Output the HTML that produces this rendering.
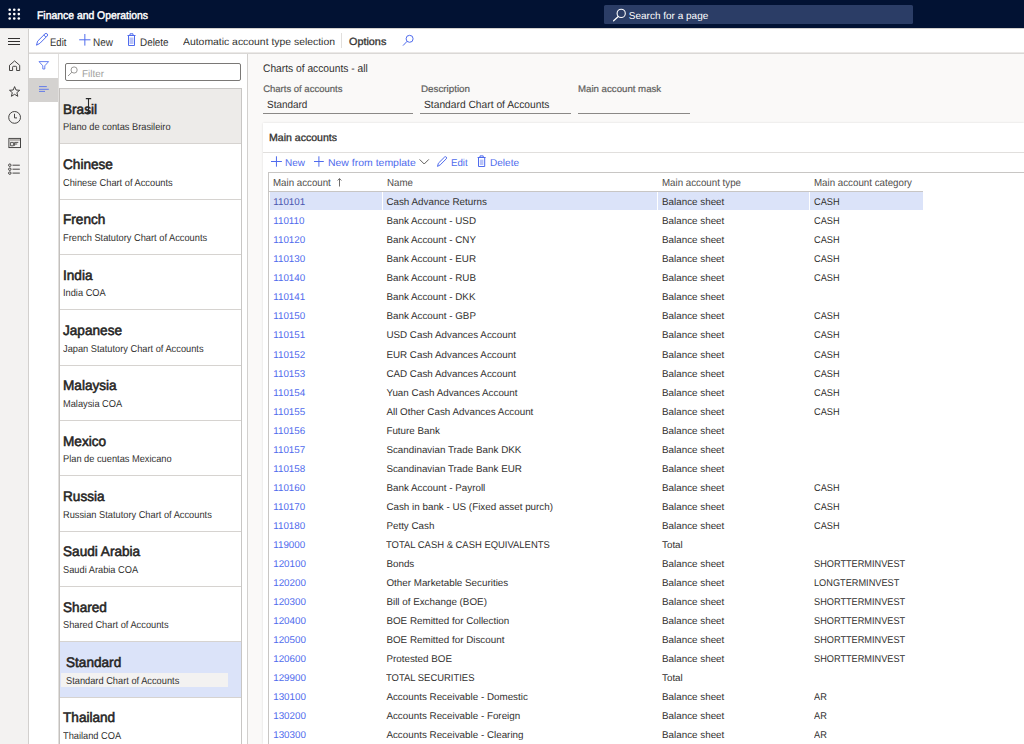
<!DOCTYPE html>
<html><head><meta charset="utf-8">
<style>
html,body{margin:0;padding:0;width:1024px;height:744px;overflow:hidden;background:#faf9f8;font-family:"Liberation Sans", sans-serif;}
.t{position:absolute;white-space:nowrap;text-rendering:geometricPrecision;transform-origin:0 0;}
svg{position:absolute;overflow:visible;}
</style></head><body>
<div style="position:absolute;left:0px;top:0px;width:1024px;height:28px;background:#021233"></div>
<svg style="left:0;top:0" width="28" height="28"><circle cx="9.7" cy="9.7" r="1.3" fill="#fff"/><circle cx="9.7" cy="14.1" r="1.3" fill="#fff"/><circle cx="9.7" cy="18.5" r="1.3" fill="#fff"/><circle cx="14.25" cy="9.7" r="1.3" fill="#fff"/><circle cx="14.25" cy="14.1" r="1.3" fill="#fff"/><circle cx="14.25" cy="18.5" r="1.3" fill="#fff"/><circle cx="18.8" cy="9.7" r="1.3" fill="#fff"/><circle cx="18.8" cy="14.1" r="1.3" fill="#fff"/><circle cx="18.8" cy="18.5" r="1.3" fill="#fff"/></svg>
<div style="position:absolute;left:604px;top:5.2px;width:309px;height:18.4px;background:#2b3d66;border-radius:1.5px"></div>
<svg style="left:0;top:0" width="1024" height="28"><circle cx="621.2" cy="13.4" r="4.1" fill="none" stroke="#fff" stroke-width="1.1"/><line x1="618.3" y1="16.5" x2="613.6" y2="20.8" stroke="#fff" stroke-width="1.2" stroke-linecap="round"/></svg>
<div style="position:absolute;left:0px;top:28px;width:1024px;height:1px;background:#d2d0ce"></div>
<div style="position:absolute;left:28px;top:29px;width:996px;height:23px;background:#fff"></div>
<div style="position:absolute;left:28px;top:52px;width:996px;height:1px;background:#ebe9e7"></div>
<div style="position:absolute;left:28px;top:53px;width:996px;height:1px;background:#dad8d6"></div>
<svg style="left:0;top:0" width="500" height="60"><path d="M36.5 45.2 L37.6 41.2 L45 33.8 Q46.2 32.9 47.2 33.9 Q48.1 35 47.2 36 L39.8 43.4 Z M43.8 35 L46 37.2" fill="none" stroke="#4f6bed" stroke-width="1" stroke-linejoin="round"/><path d="M79.2 39.8 H90.5 M84.85 34 V45.6" stroke="#4f6bed" stroke-width="1" fill="none"/><rect x="129.5" y="37.5" width="4" height="6.5" fill="#b9c3f7"/><path d="M127.5 35.5 H135.5 M128.5 35.5 V45.5 H134.5 V35.5 M130 35.5 V33.8 H133 V35.5" stroke="#4f6bed" stroke-width="1" fill="none"/><circle cx="409.6" cy="38.8" r="3.5" fill="none" stroke="#4f6bed" stroke-width="1"/><line x1="407.1" y1="41.3" x2="403" y2="45.6" stroke="#4f6bed" stroke-width="1"/></svg>
<div style="position:absolute;left:341px;top:33px;width:1px;height:15px;background:#e1dfdd"></div>
<div style="position:absolute;left:0px;top:29px;width:28px;height:715px;background:#f3f2f1"></div>
<div style="position:absolute;left:28px;top:29px;width:1px;height:715px;background:#d2d0ce"></div>
<svg style="left:0;top:0" width="28" height="200"><path d="M8 38.5 H20 M8 41.5 H20 M8 44.5 H20" stroke="#323130" stroke-width="1"/><path d="M9.5 70.5 V65.3 L14.6 60.9 L19.7 65.3 V70.5 H16.6 V67.2 Q16.6 66.3 15.7 66.3 H13.5 Q12.6 66.3 12.6 67.2 V70.5 Z" fill="none" stroke="#323130" stroke-width="0.9" stroke-linejoin="round"/><path d="M14.6 86.6 L16 90 L19.7 90.3 L16.9 92.6 L17.8 96.3 L14.6 94.3 L11.4 96.3 L12.3 92.6 L9.5 90.3 L13.2 90 Z" fill="none" stroke="#323130" stroke-width="0.9" stroke-linejoin="round"/><circle cx="14.6" cy="117.4" r="5.9" fill="none" stroke="#323130" stroke-width="0.9"/><path d="M14.5 113.8 V117.9 H17" fill="none" stroke="#323130" stroke-width="0.9"/><rect x="8.9" y="138.4" width="11.6" height="9.2" fill="none" stroke="#323130" stroke-width="0.9"/><rect x="9.4" y="138.9" width="10.6" height="2" fill="#b3b0ad"/><path d="M10.6 142.4 H13.4 V145.8 H10.6 Z M14.6 142.4 H18.3 M14.6 142.4 V145.8 M14.6 144 H17.2" stroke="#323130" stroke-width="0.8" fill="none"/><circle cx="9.8" cy="165.2" r="1.25" fill="none" stroke="#323130" stroke-width="0.9"/><circle cx="9.8" cy="169.2" r="1.25" fill="none" stroke="#323130" stroke-width="0.9"/><circle cx="9.8" cy="173.1" r="1.25" fill="none" stroke="#323130" stroke-width="0.9"/><path d="M12.5 165.2 H19.8 M12.5 169.2 H19.8 M12.5 173.1 H19.8" stroke="#323130" stroke-width="0.9"/></svg>
<div style="position:absolute;left:29px;top:54px;width:29px;height:690px;background:#fff"></div>
<div style="position:absolute;left:58px;top:54px;width:1px;height:690px;background:#e1dfdd"></div>
<div style="position:absolute;left:29px;top:78px;width:29px;height:24px;background:#d4d2d0"></div>
<svg style="left:0;top:0" width="60" height="110"><path d="M39 61.6 H48.6 L44.8 65.8 V69 H42.8 V65.8 Z" fill="none" stroke="#4f6bed" stroke-width="0.85" stroke-linejoin="round"/><path d="M39 86.6 H46.8 M39 89.3 H48.8 M39 91.4 H45" stroke="#4f6bed" stroke-width="0.85"/></svg>
<div style="position:absolute;left:59px;top:54px;width:188px;height:690px;background:#fff"></div>
<div style="position:absolute;left:247px;top:54px;width:1px;height:690px;background:#d2d0ce"></div>
<div style="position:absolute;left:64.5px;top:63.2px;width:176px;height:17.6px;border:1px solid #7a7876;border-radius:2px;background:#fff;box-sizing:border-box"></div>
<svg style="left:0;top:0" width="260" height="100"><circle cx="74.1" cy="70" r="3.1" fill="none" stroke="#8f8d8b" stroke-width="0.9"/><line x1="71.9" y1="72.2" x2="68" y2="76" stroke="#8f8d8b" stroke-width="0.9"/></svg>
<div style="position:absolute;left:59px;top:88px;width:1px;height:656px;background:#c3c0bd"></div>
<div style="position:absolute;left:241px;top:88px;width:1px;height:656px;background:#c8c6c4"></div>
<div style="position:absolute;left:60px;top:88px;width:181px;height:1px;background:#c8c6c4"></div>
<div style="position:absolute;left:60px;top:89.0px;width:181px;height:54.33px;background:#edebe9"></div>
<div style="position:absolute;left:60px;top:144.33px;width:181px;height:54.33px;background:#fff"></div>
<div style="position:absolute;left:60px;top:143.33px;width:181px;height:1px;background:#d6d3d0"></div>
<div style="position:absolute;left:60px;top:199.66px;width:181px;height:54.33px;background:#fff"></div>
<div style="position:absolute;left:60px;top:198.66px;width:181px;height:1px;background:#d6d3d0"></div>
<div style="position:absolute;left:60px;top:254.99px;width:181px;height:54.33px;background:#fff"></div>
<div style="position:absolute;left:60px;top:253.99px;width:181px;height:1px;background:#d6d3d0"></div>
<div style="position:absolute;left:60px;top:310.32px;width:181px;height:54.33px;background:#fff"></div>
<div style="position:absolute;left:60px;top:309.32px;width:181px;height:1px;background:#d6d3d0"></div>
<div style="position:absolute;left:60px;top:365.65px;width:181px;height:54.33px;background:#fff"></div>
<div style="position:absolute;left:60px;top:364.65px;width:181px;height:1px;background:#d6d3d0"></div>
<div style="position:absolute;left:60px;top:420.98px;width:181px;height:54.33px;background:#fff"></div>
<div style="position:absolute;left:60px;top:419.98px;width:181px;height:1px;background:#d6d3d0"></div>
<div style="position:absolute;left:60px;top:476.31px;width:181px;height:54.33px;background:#fff"></div>
<div style="position:absolute;left:60px;top:475.31px;width:181px;height:1px;background:#d6d3d0"></div>
<div style="position:absolute;left:60px;top:531.64px;width:181px;height:54.33px;background:#fff"></div>
<div style="position:absolute;left:60px;top:530.64px;width:181px;height:1px;background:#d6d3d0"></div>
<div style="position:absolute;left:60px;top:586.97px;width:181px;height:54.33px;background:#fff"></div>
<div style="position:absolute;left:60px;top:585.97px;width:181px;height:1px;background:#d6d3d0"></div>
<div style="position:absolute;left:60px;top:642.3px;width:181px;height:54.33px;background:#dbe3f9"></div>
<div style="position:absolute;left:60px;top:641.3px;width:181px;height:1px;background:#d6d3d0"></div>
<div style="position:absolute;left:60.7px;top:673.3px;width:167px;height:14px;background:#f3f2f1"></div>
<div style="position:absolute;left:60px;top:697.63px;width:181px;height:54.33px;background:#fff"></div>
<div style="position:absolute;left:60px;top:696.63px;width:181px;height:1px;background:#d6d3d0"></div>
<div style="position:absolute;left:263px;top:112.5px;width:150px;height:1px;background:#8a8886"></div>
<div style="position:absolute;left:420px;top:112.5px;width:150.6px;height:1px;background:#8a8886"></div>
<div style="position:absolute;left:578px;top:112.5px;width:111.5px;height:1px;background:#8a8886"></div>
<div style="position:absolute;left:263px;top:123.4px;width:761px;height:621px;background:#fff;box-shadow:0 0 2px rgba(0,0,0,0.12)"></div>
<div style="position:absolute;left:263px;top:152px;width:761px;height:1px;background:#e1dfdd"></div>
<svg style="left:0;top:0" width="1024" height="180"><path d="M271 161.5 H281.9 M276.45 156.3 V166.7" stroke="#4f6bed" stroke-width="1" fill="none"/><path d="M314 161.5 H323.8 M318.9 156.3 V166.7" stroke="#4f6bed" stroke-width="1" fill="none"/><path d="M419.6 159.4 L424.2 164 L428.8 159.4" stroke="#605e5c" stroke-width="1" fill="none"/><path d="M437.5 166.4 L438.4 163.2 L444.5 157.1 Q445.5 156.3 446.3 157.1 Q447.1 158 446.3 158.8 L440.2 164.9 Z" fill="none" stroke="#4f6bed" stroke-width="1" stroke-linejoin="round"/><rect x="479.8" y="159.6" width="3.6" height="5.4" fill="#b9c3f7"/><path d="M477.6 157.5 H485.6 M478.5 157.5 V166.5 H484.7 V157.5 M480 157.5 V155.9 H483.2 V157.5" stroke="#4f6bed" stroke-width="1" fill="none"/></svg>
<div style="position:absolute;left:268px;top:172px;width:756px;height:1px;background:#c8c6c4"></div>
<div style="position:absolute;left:268px;top:172px;width:1px;height:572px;background:#c8c6c4"></div>
<div style="position:absolute;left:269px;top:191px;width:654px;height:1px;background:#c8c6c4"></div>
<svg style="left:0;top:0" width="400" height="200"><path d="M339.5 178.6 V186.5 M337.6 180.5 L339.5 178.6 L341.4 180.5" stroke="#605e5c" stroke-width="0.9" fill="none"/></svg>
<div style="position:absolute;left:270px;top:191.6px;width:652.7px;height:18px;background:#dbe3f9"></div>
<div style="position:absolute;left:382px;top:191.6px;width:1px;height:18px;background:#fff"></div>
<div style="position:absolute;left:656.5px;top:191.6px;width:1px;height:18px;background:#fff"></div>
<div style="position:absolute;left:808.8px;top:191.6px;width:1px;height:18px;background:#fff"></div>
<div class="t" style="left:37px;top:11px;font-size:11px;line-height:11px;font-weight:400;color:#fff;-webkit-text-stroke:0.45px #fff;transform:scaleX(0.9453);">Finance and Operations</div>
<div class="t" style="left:628.8px;top:12px;font-size:10px;line-height:10px;font-weight:400;color:#fff;">Search for a page</div>
<div class="t" style="left:49.9px;top:38px;font-size:11px;line-height:11px;font-weight:400;color:#323130;transform:scaleX(0.8646);">Edit</div>
<div class="t" style="left:93.3px;top:38px;font-size:11px;line-height:11px;font-weight:400;color:#323130;transform:scaleX(0.9039);">New</div>
<div class="t" style="left:139.7px;top:38px;font-size:11px;line-height:11px;font-weight:400;color:#323130;transform:scaleX(0.8995);">Delete</div>
<div class="t" style="left:182.9px;top:38px;font-size:10px;line-height:10px;font-weight:400;color:#323130;transform:scaleX(1.0396);">Automatic account type selection</div>
<div class="t" style="left:348.9px;top:38px;font-size:10.4px;line-height:10.4px;font-weight:400;color:#323130;-webkit-text-stroke:0.3px #323130;transform:scaleX(1.0415);">Options</div>
<div class="t" style="left:81.5px;top:70px;font-size:10px;line-height:10px;font-weight:400;color:#a19f9d;transform:scaleX(0.9895);">Filter</div>
<div class="t" style="left:62.7px;top:103px;font-size:13.9px;line-height:13.9px;font-weight:400;color:#252423;-webkit-text-stroke:0.55px #252423;transform:scaleX(0.9795);">Brasil</div>
<div class="t" style="left:62.7px;top:123px;font-size:10.0px;line-height:10.0px;font-weight:400;color:#323130;transform:scaleX(0.9261);">Plano de contas Brasileiro</div>
<div class="t" style="left:62.7px;top:158px;font-size:13.9px;line-height:13.9px;font-weight:400;color:#252423;-webkit-text-stroke:0.55px #252423;transform:scaleX(0.9795);">Chinese</div>
<div class="t" style="left:62.7px;top:179px;font-size:10.0px;line-height:10.0px;font-weight:400;color:#323130;transform:scaleX(0.9261);">Chinese Chart of Accounts</div>
<div class="t" style="left:62.7px;top:213px;font-size:13.9px;line-height:13.9px;font-weight:400;color:#252423;-webkit-text-stroke:0.55px #252423;transform:scaleX(0.9795);">French</div>
<div class="t" style="left:62.7px;top:234px;font-size:10.0px;line-height:10.0px;font-weight:400;color:#323130;transform:scaleX(0.9261);">French Statutory Chart of Accounts</div>
<div class="t" style="left:62.7px;top:269px;font-size:13.9px;line-height:13.9px;font-weight:400;color:#252423;-webkit-text-stroke:0.55px #252423;transform:scaleX(0.9795);">India</div>
<div class="t" style="left:62.7px;top:289px;font-size:10.0px;line-height:10.0px;font-weight:400;color:#323130;transform:scaleX(0.9261);">India COA</div>
<div class="t" style="left:62.7px;top:324px;font-size:13.9px;line-height:13.9px;font-weight:400;color:#252423;-webkit-text-stroke:0.55px #252423;transform:scaleX(0.9795);">Japanese</div>
<div class="t" style="left:62.7px;top:345px;font-size:10.0px;line-height:10.0px;font-weight:400;color:#323130;transform:scaleX(0.9261);">Japan Statutory Chart of Accounts</div>
<div class="t" style="left:62.7px;top:379px;font-size:13.9px;line-height:13.9px;font-weight:400;color:#252423;-webkit-text-stroke:0.55px #252423;transform:scaleX(0.9795);">Malaysia</div>
<div class="t" style="left:62.7px;top:400px;font-size:10.0px;line-height:10.0px;font-weight:400;color:#323130;transform:scaleX(0.9261);">Malaysia COA</div>
<div class="t" style="left:62.7px;top:435px;font-size:13.9px;line-height:13.9px;font-weight:400;color:#252423;-webkit-text-stroke:0.55px #252423;transform:scaleX(0.9795);">Mexico</div>
<div class="t" style="left:62.7px;top:455px;font-size:10.0px;line-height:10.0px;font-weight:400;color:#323130;transform:scaleX(0.9261);">Plan de cuentas Mexicano</div>
<div class="t" style="left:62.7px;top:490px;font-size:13.9px;line-height:13.9px;font-weight:400;color:#252423;-webkit-text-stroke:0.55px #252423;transform:scaleX(0.9795);">Russia</div>
<div class="t" style="left:62.7px;top:511px;font-size:10.0px;line-height:10.0px;font-weight:400;color:#323130;transform:scaleX(0.9261);">Russian Statutory Chart of Accounts</div>
<div class="t" style="left:62.7px;top:545px;font-size:13.9px;line-height:13.9px;font-weight:400;color:#252423;-webkit-text-stroke:0.55px #252423;transform:scaleX(0.9795);">Saudi Arabia</div>
<div class="t" style="left:62.7px;top:566px;font-size:10.0px;line-height:10.0px;font-weight:400;color:#323130;transform:scaleX(0.9261);">Saudi Arabia COA</div>
<div class="t" style="left:62.7px;top:601px;font-size:13.9px;line-height:13.9px;font-weight:400;color:#252423;-webkit-text-stroke:0.55px #252423;transform:scaleX(0.9795);">Shared</div>
<div class="t" style="left:62.7px;top:621px;font-size:10.0px;line-height:10.0px;font-weight:400;color:#323130;transform:scaleX(0.9261);">Shared Chart of Accounts</div>
<div class="t" style="left:65.7px;top:656px;font-size:13.9px;line-height:13.9px;font-weight:400;color:#252423;-webkit-text-stroke:0.55px #252423;transform:scaleX(0.9795);">Standard</div>
<div class="t" style="left:65.7px;top:677px;font-size:10.0px;line-height:10.0px;font-weight:400;color:#323130;transform:scaleX(0.9261);">Standard Chart of Accounts</div>
<div class="t" style="left:62.7px;top:711px;font-size:13.9px;line-height:13.9px;font-weight:400;color:#252423;-webkit-text-stroke:0.55px #252423;transform:scaleX(0.9795);">Thailand</div>
<div class="t" style="left:62.7px;top:732px;font-size:10.0px;line-height:10.0px;font-weight:400;color:#323130;transform:scaleX(0.9261);">Thailand COA</div>
<div class="t" style="left:263.4px;top:64px;font-size:11px;line-height:11px;font-weight:400;color:#323130;transform:scaleX(0.9307);">Charts of accounts - all</div>
<div class="t" style="left:263.2px;top:85px;font-size:9.5px;line-height:9.5px;font-weight:400;color:#605e5c;-webkit-text-stroke:0.2px #605e5c;">Charts of accounts</div>
<div class="t" style="left:266.9px;top:100px;font-size:10.5px;line-height:10.5px;font-weight:400;color:#323130;transform:scaleX(0.9478);">Standard</div>
<div class="t" style="left:420.5px;top:85px;font-size:9.5px;line-height:9.5px;font-weight:400;color:#605e5c;-webkit-text-stroke:0.2px #605e5c;transform:scaleX(1.0309);">Description</div>
<div class="t" style="left:424.2px;top:100px;font-size:10.5px;line-height:10.5px;font-weight:400;color:#323130;transform:scaleX(0.9765);">Standard Chart of Accounts</div>
<div class="t" style="left:578px;top:85px;font-size:9.5px;line-height:9.5px;font-weight:400;color:#605e5c;-webkit-text-stroke:0.2px #605e5c;transform:scaleX(1.0166);">Main account mask</div>
<div class="t" style="left:269.1px;top:134px;font-size:10.4px;line-height:10.4px;font-weight:400;color:#323130;-webkit-text-stroke:0.3px #323130;transform:scaleX(1.0149);">Main accounts</div>
<div class="t" style="left:285px;top:159px;font-size:10px;line-height:10px;font-weight:400;color:#4f6bed;transform:scaleX(0.9942);">New</div>
<div class="t" style="left:327.6px;top:159px;font-size:10px;line-height:10px;font-weight:400;color:#4f6bed;transform:scaleX(1.0462);">New from template</div>
<div class="t" style="left:450.7px;top:159px;font-size:10px;line-height:10px;font-weight:400;color:#4f6bed;transform:scaleX(0.9690);">Edit</div>
<div class="t" style="left:490.3px;top:159px;font-size:10px;line-height:10px;font-weight:400;color:#4f6bed;transform:scaleX(1.0032);">Delete</div>
<div class="t" style="left:273.1px;top:179px;font-size:10.3px;line-height:10.3px;font-weight:400;color:#4f4d4b;transform:scaleX(0.9437);">Main account</div>
<div class="t" style="left:386.7px;top:179px;font-size:10.3px;line-height:10.3px;font-weight:400;color:#4f4d4b;transform:scaleX(0.9449);">Name</div>
<div class="t" style="left:662px;top:179px;font-size:10.3px;line-height:10.3px;font-weight:400;color:#4f4d4b;transform:scaleX(0.9452);">Main account type</div>
<div class="t" style="left:814.3px;top:179px;font-size:10.3px;line-height:10.3px;font-weight:400;color:#4f4d4b;transform:scaleX(0.9459);">Main account category</div>
<div class="t" style="left:273.2px;top:198px;font-size:9.84px;line-height:9.84px;font-weight:400;color:#4a57b0;">110101</div>
<div class="t" style="left:386.4px;top:198px;font-size:9.84px;line-height:9.84px;font-weight:400;color:#323130;">Cash Advance Returns</div>
<div class="t" style="left:662px;top:198px;font-size:9.84px;line-height:9.84px;font-weight:400;color:#323130;">Balance sheet</div>
<div class="t" style="left:814.2px;top:198px;font-size:9.84px;line-height:9.84px;font-weight:400;color:#323130;transform:scaleX(0.9350);">CASH</div>
<div class="t" style="left:273.2px;top:217px;font-size:9.84px;line-height:9.84px;font-weight:400;color:#4f6bed;">110110</div>
<div class="t" style="left:386.4px;top:217px;font-size:9.84px;line-height:9.84px;font-weight:400;color:#323130;">Bank Account - USD</div>
<div class="t" style="left:662px;top:217px;font-size:9.84px;line-height:9.84px;font-weight:400;color:#323130;">Balance sheet</div>
<div class="t" style="left:814.2px;top:217px;font-size:9.84px;line-height:9.84px;font-weight:400;color:#323130;transform:scaleX(0.9350);">CASH</div>
<div class="t" style="left:273.2px;top:236px;font-size:9.84px;line-height:9.84px;font-weight:400;color:#4f6bed;">110120</div>
<div class="t" style="left:386.4px;top:236px;font-size:9.84px;line-height:9.84px;font-weight:400;color:#323130;">Bank Account - CNY</div>
<div class="t" style="left:662px;top:236px;font-size:9.84px;line-height:9.84px;font-weight:400;color:#323130;">Balance sheet</div>
<div class="t" style="left:814.2px;top:236px;font-size:9.84px;line-height:9.84px;font-weight:400;color:#323130;transform:scaleX(0.9350);">CASH</div>
<div class="t" style="left:273.2px;top:255px;font-size:9.84px;line-height:9.84px;font-weight:400;color:#4f6bed;">110130</div>
<div class="t" style="left:386.4px;top:255px;font-size:9.84px;line-height:9.84px;font-weight:400;color:#323130;">Bank Account - EUR</div>
<div class="t" style="left:662px;top:255px;font-size:9.84px;line-height:9.84px;font-weight:400;color:#323130;">Balance sheet</div>
<div class="t" style="left:814.2px;top:255px;font-size:9.84px;line-height:9.84px;font-weight:400;color:#323130;transform:scaleX(0.9350);">CASH</div>
<div class="t" style="left:273.2px;top:274px;font-size:9.84px;line-height:9.84px;font-weight:400;color:#4f6bed;">110140</div>
<div class="t" style="left:386.4px;top:274px;font-size:9.84px;line-height:9.84px;font-weight:400;color:#323130;">Bank Account - RUB</div>
<div class="t" style="left:662px;top:274px;font-size:9.84px;line-height:9.84px;font-weight:400;color:#323130;">Balance sheet</div>
<div class="t" style="left:814.2px;top:274px;font-size:9.84px;line-height:9.84px;font-weight:400;color:#323130;transform:scaleX(0.9350);">CASH</div>
<div class="t" style="left:273.2px;top:293px;font-size:9.84px;line-height:9.84px;font-weight:400;color:#4f6bed;">110141</div>
<div class="t" style="left:386.4px;top:293px;font-size:9.84px;line-height:9.84px;font-weight:400;color:#323130;">Bank Account - DKK</div>
<div class="t" style="left:662px;top:293px;font-size:9.84px;line-height:9.84px;font-weight:400;color:#323130;">Balance sheet</div>
<div class="t" style="left:273.2px;top:312px;font-size:9.84px;line-height:9.84px;font-weight:400;color:#4f6bed;">110150</div>
<div class="t" style="left:386.4px;top:312px;font-size:9.84px;line-height:9.84px;font-weight:400;color:#323130;">Bank Account - GBP</div>
<div class="t" style="left:662px;top:312px;font-size:9.84px;line-height:9.84px;font-weight:400;color:#323130;">Balance sheet</div>
<div class="t" style="left:814.2px;top:312px;font-size:9.84px;line-height:9.84px;font-weight:400;color:#323130;transform:scaleX(0.9350);">CASH</div>
<div class="t" style="left:273.2px;top:331px;font-size:9.84px;line-height:9.84px;font-weight:400;color:#4f6bed;">110151</div>
<div class="t" style="left:386.4px;top:331px;font-size:9.84px;line-height:9.84px;font-weight:400;color:#323130;">USD Cash Advances Account</div>
<div class="t" style="left:662px;top:331px;font-size:9.84px;line-height:9.84px;font-weight:400;color:#323130;">Balance sheet</div>
<div class="t" style="left:814.2px;top:331px;font-size:9.84px;line-height:9.84px;font-weight:400;color:#323130;transform:scaleX(0.9350);">CASH</div>
<div class="t" style="left:273.2px;top:351px;font-size:9.84px;line-height:9.84px;font-weight:400;color:#4f6bed;">110152</div>
<div class="t" style="left:386.4px;top:351px;font-size:9.84px;line-height:9.84px;font-weight:400;color:#323130;">EUR Cash Advances Account</div>
<div class="t" style="left:662px;top:351px;font-size:9.84px;line-height:9.84px;font-weight:400;color:#323130;">Balance sheet</div>
<div class="t" style="left:814.2px;top:351px;font-size:9.84px;line-height:9.84px;font-weight:400;color:#323130;transform:scaleX(0.9350);">CASH</div>
<div class="t" style="left:273.2px;top:370px;font-size:9.84px;line-height:9.84px;font-weight:400;color:#4f6bed;">110153</div>
<div class="t" style="left:386.4px;top:370px;font-size:9.84px;line-height:9.84px;font-weight:400;color:#323130;">CAD Cash Advances Account</div>
<div class="t" style="left:662px;top:370px;font-size:9.84px;line-height:9.84px;font-weight:400;color:#323130;">Balance sheet</div>
<div class="t" style="left:814.2px;top:370px;font-size:9.84px;line-height:9.84px;font-weight:400;color:#323130;transform:scaleX(0.9350);">CASH</div>
<div class="t" style="left:273.2px;top:389px;font-size:9.84px;line-height:9.84px;font-weight:400;color:#4f6bed;">110154</div>
<div class="t" style="left:386.4px;top:389px;font-size:9.84px;line-height:9.84px;font-weight:400;color:#323130;">Yuan Cash Advances Account</div>
<div class="t" style="left:662px;top:389px;font-size:9.84px;line-height:9.84px;font-weight:400;color:#323130;">Balance sheet</div>
<div class="t" style="left:814.2px;top:389px;font-size:9.84px;line-height:9.84px;font-weight:400;color:#323130;transform:scaleX(0.9350);">CASH</div>
<div class="t" style="left:273.2px;top:408px;font-size:9.84px;line-height:9.84px;font-weight:400;color:#4f6bed;">110155</div>
<div class="t" style="left:386.4px;top:408px;font-size:9.84px;line-height:9.84px;font-weight:400;color:#323130;">All Other Cash Advances Account</div>
<div class="t" style="left:662px;top:408px;font-size:9.84px;line-height:9.84px;font-weight:400;color:#323130;">Balance sheet</div>
<div class="t" style="left:814.2px;top:408px;font-size:9.84px;line-height:9.84px;font-weight:400;color:#323130;transform:scaleX(0.9350);">CASH</div>
<div class="t" style="left:273.2px;top:427px;font-size:9.84px;line-height:9.84px;font-weight:400;color:#4f6bed;">110156</div>
<div class="t" style="left:386.4px;top:427px;font-size:9.84px;line-height:9.84px;font-weight:400;color:#323130;">Future Bank</div>
<div class="t" style="left:662px;top:427px;font-size:9.84px;line-height:9.84px;font-weight:400;color:#323130;">Balance sheet</div>
<div class="t" style="left:273.2px;top:446px;font-size:9.84px;line-height:9.84px;font-weight:400;color:#4f6bed;">110157</div>
<div class="t" style="left:386.4px;top:446px;font-size:9.84px;line-height:9.84px;font-weight:400;color:#323130;">Scandinavian Trade Bank DKK</div>
<div class="t" style="left:662px;top:446px;font-size:9.84px;line-height:9.84px;font-weight:400;color:#323130;">Balance sheet</div>
<div class="t" style="left:273.2px;top:465px;font-size:9.84px;line-height:9.84px;font-weight:400;color:#4f6bed;">110158</div>
<div class="t" style="left:386.4px;top:465px;font-size:9.84px;line-height:9.84px;font-weight:400;color:#323130;">Scandinavian Trade Bank EUR</div>
<div class="t" style="left:662px;top:465px;font-size:9.84px;line-height:9.84px;font-weight:400;color:#323130;">Balance sheet</div>
<div class="t" style="left:273.2px;top:484px;font-size:9.84px;line-height:9.84px;font-weight:400;color:#4f6bed;">110160</div>
<div class="t" style="left:386.4px;top:484px;font-size:9.84px;line-height:9.84px;font-weight:400;color:#323130;">Bank Account - Payroll</div>
<div class="t" style="left:662px;top:484px;font-size:9.84px;line-height:9.84px;font-weight:400;color:#323130;">Balance sheet</div>
<div class="t" style="left:814.2px;top:484px;font-size:9.84px;line-height:9.84px;font-weight:400;color:#323130;transform:scaleX(0.9350);">CASH</div>
<div class="t" style="left:273.2px;top:503px;font-size:9.84px;line-height:9.84px;font-weight:400;color:#4f6bed;">110170</div>
<div class="t" style="left:386.4px;top:503px;font-size:9.84px;line-height:9.84px;font-weight:400;color:#323130;">Cash in bank - US (Fixed asset purch)</div>
<div class="t" style="left:662px;top:503px;font-size:9.84px;line-height:9.84px;font-weight:400;color:#323130;">Balance sheet</div>
<div class="t" style="left:814.2px;top:503px;font-size:9.84px;line-height:9.84px;font-weight:400;color:#323130;transform:scaleX(0.9350);">CASH</div>
<div class="t" style="left:273.2px;top:522px;font-size:9.84px;line-height:9.84px;font-weight:400;color:#4f6bed;">110180</div>
<div class="t" style="left:386.4px;top:522px;font-size:9.84px;line-height:9.84px;font-weight:400;color:#323130;">Petty Cash</div>
<div class="t" style="left:662px;top:522px;font-size:9.84px;line-height:9.84px;font-weight:400;color:#323130;">Balance sheet</div>
<div class="t" style="left:814.2px;top:522px;font-size:9.84px;line-height:9.84px;font-weight:400;color:#323130;transform:scaleX(0.9350);">CASH</div>
<div class="t" style="left:273.2px;top:541px;font-size:9.84px;line-height:9.84px;font-weight:400;color:#4f6bed;">119000</div>
<div class="t" style="left:386.4px;top:541px;font-size:9.84px;line-height:9.84px;font-weight:400;color:#323130;transform:scaleX(0.9600);">TOTAL CASH &amp; CASH EQUIVALENTS</div>
<div class="t" style="left:662px;top:541px;font-size:9.84px;line-height:9.84px;font-weight:400;color:#323130;">Total</div>
<div class="t" style="left:273.2px;top:560px;font-size:9.84px;line-height:9.84px;font-weight:400;color:#4f6bed;">120100</div>
<div class="t" style="left:386.4px;top:560px;font-size:9.84px;line-height:9.84px;font-weight:400;color:#323130;">Bonds</div>
<div class="t" style="left:662px;top:560px;font-size:9.84px;line-height:9.84px;font-weight:400;color:#323130;">Balance sheet</div>
<div class="t" style="left:814.2px;top:560px;font-size:9.84px;line-height:9.84px;font-weight:400;color:#323130;transform:scaleX(0.9350);">SHORTTERMINVEST</div>
<div class="t" style="left:273.2px;top:579px;font-size:9.84px;line-height:9.84px;font-weight:400;color:#4f6bed;">120200</div>
<div class="t" style="left:386.4px;top:579px;font-size:9.84px;line-height:9.84px;font-weight:400;color:#323130;">Other Marketable Securities</div>
<div class="t" style="left:662px;top:579px;font-size:9.84px;line-height:9.84px;font-weight:400;color:#323130;">Balance sheet</div>
<div class="t" style="left:814.2px;top:579px;font-size:9.84px;line-height:9.84px;font-weight:400;color:#323130;transform:scaleX(0.9350);">LONGTERMINVEST</div>
<div class="t" style="left:273.2px;top:598px;font-size:9.84px;line-height:9.84px;font-weight:400;color:#4f6bed;">120300</div>
<div class="t" style="left:386.4px;top:598px;font-size:9.84px;line-height:9.84px;font-weight:400;color:#323130;">Bill of Exchange (BOE)</div>
<div class="t" style="left:662px;top:598px;font-size:9.84px;line-height:9.84px;font-weight:400;color:#323130;">Balance sheet</div>
<div class="t" style="left:814.2px;top:598px;font-size:9.84px;line-height:9.84px;font-weight:400;color:#323130;transform:scaleX(0.9350);">SHORTTERMINVEST</div>
<div class="t" style="left:273.2px;top:617px;font-size:9.84px;line-height:9.84px;font-weight:400;color:#4f6bed;">120400</div>
<div class="t" style="left:386.4px;top:617px;font-size:9.84px;line-height:9.84px;font-weight:400;color:#323130;">BOE Remitted for Collection</div>
<div class="t" style="left:662px;top:617px;font-size:9.84px;line-height:9.84px;font-weight:400;color:#323130;">Balance sheet</div>
<div class="t" style="left:814.2px;top:617px;font-size:9.84px;line-height:9.84px;font-weight:400;color:#323130;transform:scaleX(0.9350);">SHORTTERMINVEST</div>
<div class="t" style="left:273.2px;top:636px;font-size:9.84px;line-height:9.84px;font-weight:400;color:#4f6bed;">120500</div>
<div class="t" style="left:386.4px;top:636px;font-size:9.84px;line-height:9.84px;font-weight:400;color:#323130;">BOE Remitted for Discount</div>
<div class="t" style="left:662px;top:636px;font-size:9.84px;line-height:9.84px;font-weight:400;color:#323130;">Balance sheet</div>
<div class="t" style="left:814.2px;top:636px;font-size:9.84px;line-height:9.84px;font-weight:400;color:#323130;transform:scaleX(0.9350);">SHORTTERMINVEST</div>
<div class="t" style="left:273.2px;top:655px;font-size:9.84px;line-height:9.84px;font-weight:400;color:#4f6bed;">120600</div>
<div class="t" style="left:386.4px;top:655px;font-size:9.84px;line-height:9.84px;font-weight:400;color:#323130;">Protested BOE</div>
<div class="t" style="left:662px;top:655px;font-size:9.84px;line-height:9.84px;font-weight:400;color:#323130;">Balance sheet</div>
<div class="t" style="left:814.2px;top:655px;font-size:9.84px;line-height:9.84px;font-weight:400;color:#323130;transform:scaleX(0.9350);">SHORTTERMINVEST</div>
<div class="t" style="left:273.2px;top:674px;font-size:9.84px;line-height:9.84px;font-weight:400;color:#4f6bed;">129900</div>
<div class="t" style="left:386.4px;top:674px;font-size:9.84px;line-height:9.84px;font-weight:400;color:#323130;transform:scaleX(0.9600);">TOTAL SECURITIES</div>
<div class="t" style="left:662px;top:674px;font-size:9.84px;line-height:9.84px;font-weight:400;color:#323130;">Total</div>
<div class="t" style="left:273.2px;top:693px;font-size:9.84px;line-height:9.84px;font-weight:400;color:#4f6bed;">130100</div>
<div class="t" style="left:386.4px;top:693px;font-size:9.84px;line-height:9.84px;font-weight:400;color:#323130;">Accounts Receivable - Domestic</div>
<div class="t" style="left:662px;top:693px;font-size:9.84px;line-height:9.84px;font-weight:400;color:#323130;">Balance sheet</div>
<div class="t" style="left:814.2px;top:693px;font-size:9.84px;line-height:9.84px;font-weight:400;color:#323130;transform:scaleX(0.9350);">AR</div>
<div class="t" style="left:273.2px;top:712px;font-size:9.84px;line-height:9.84px;font-weight:400;color:#4f6bed;">130200</div>
<div class="t" style="left:386.4px;top:712px;font-size:9.84px;line-height:9.84px;font-weight:400;color:#323130;">Accounts Receivable - Foreign</div>
<div class="t" style="left:662px;top:712px;font-size:9.84px;line-height:9.84px;font-weight:400;color:#323130;">Balance sheet</div>
<div class="t" style="left:814.2px;top:712px;font-size:9.84px;line-height:9.84px;font-weight:400;color:#323130;transform:scaleX(0.9350);">AR</div>
<div class="t" style="left:273.2px;top:731px;font-size:9.84px;line-height:9.84px;font-weight:400;color:#4f6bed;">130300</div>
<div class="t" style="left:386.4px;top:731px;font-size:9.84px;line-height:9.84px;font-weight:400;color:#323130;">Accounts Receivable - Clearing</div>
<div class="t" style="left:662px;top:731px;font-size:9.84px;line-height:9.84px;font-weight:400;color:#323130;">Balance sheet</div>
<div class="t" style="left:814.2px;top:731px;font-size:9.84px;line-height:9.84px;font-weight:400;color:#323130;transform:scaleX(0.9350);">AR</div>
<svg style="left:0;top:0" width="120" height="120"><path d="M85.8 98.6 H91.2 M88.5 98.6 V112.4 M86.5 112.4 H90.5" fill="none" stroke="#2a2a2a" stroke-width="1.1"/></svg>
</body></html>
